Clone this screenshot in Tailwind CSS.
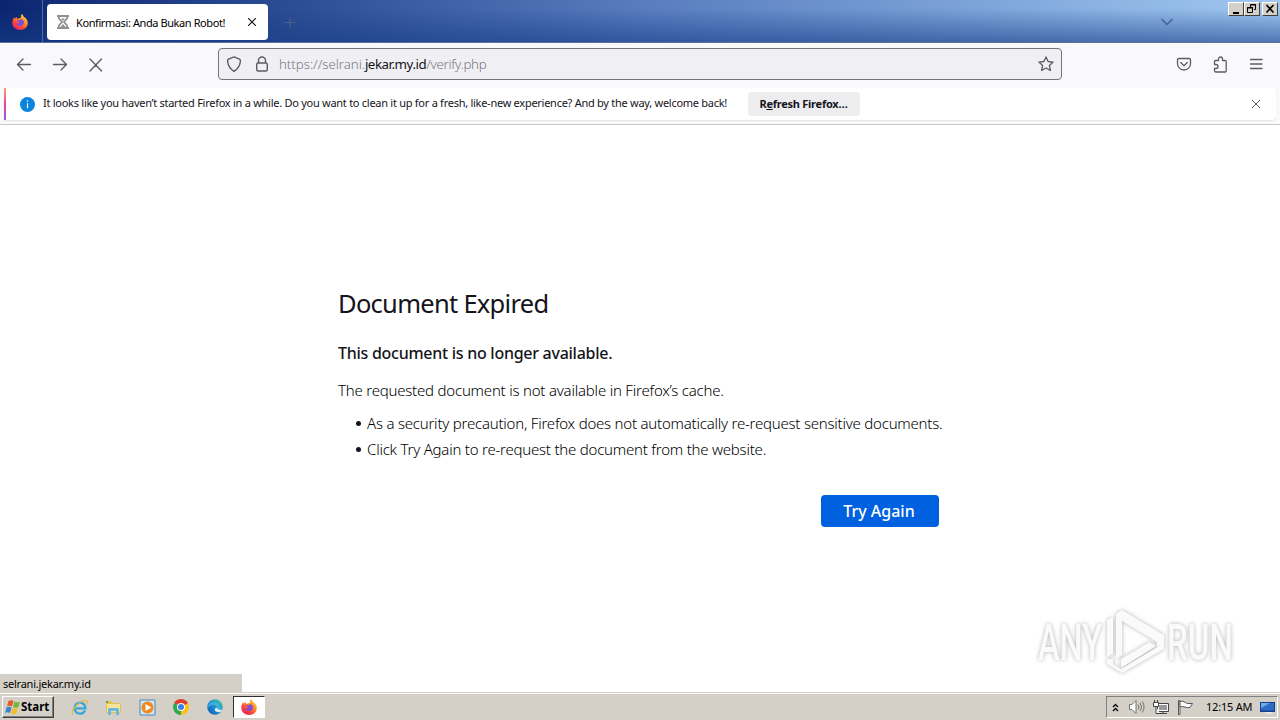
<!DOCTYPE html>
<html lang="en">
<head>
<meta charset="utf-8">
<title>Document Expired</title>
<script src="https://cdn.jsdelivr.net/npm/@tailwindcss/browser@4"></script>
</head>
<body class="w-[1280px] h-[720px] overflow-hidden bg-white font-['Noto_Sans',sans-serif] text-black">
<svg class="absolute size-0">
  <defs>
    <linearGradient id="flame" x1="1" y1="0" x2="0.3" y2="1"><stop offset="0" stop-color="#ffe14a"/><stop offset=".4" stop-color="#ff9a28"/><stop offset=".75" stop-color="#ff4438"/><stop offset="1" stop-color="#e8216c"/></linearGradient>
    <linearGradient id="edge" x1="0" y1="1" x2="1" y2="0"><stop offset="0" stop-color="#1556b0"/><stop offset=".5" stop-color="#1c8fd8"/><stop offset="1" stop-color="#4fd089"/></linearGradient>
    <symbol id="fox" viewBox="0 0 16 16">
      <path d="M10 0c1 1 1.200 2 2.200 2.900C14 4 15.800 6 15.800 9c0 4-3.300 7-7.600 7S.3 13 .3 8.800c0-2.200.8-4.300 2-5.600l.6 1.500L4.500 3l1 2.100C6.500 4 8 4 9 4 8.500 2.500 9 1 10 0z" fill="url(#flame)"/>
      <path d="M5 6.500c1 .1 2-.4 3-.5l1.500-1C12 6 12.500 8 11.700 9.700 11 11.300 9.500 12 8 12c-2 0-3.500-1.300-3.800-3 .8.800 2 .6 3-.2.300-.5-.2-.8-.9-1C5.500 7.700 5 7.200 5 6.500z" fill="#7b4fd8"/>
    </symbol>
  </defs>
</svg>
<div class="flex flex-col w-[1280px] h-[720px]">
  <header class="relative flex h-[43px] shrink-0 bg-linear-to-r from-[#0b2670] via-[#587cbe] to-[#a0c8f0]">
    <div class="absolute inset-0 bg-linear-to-b from-transparent from-20% to-[#163c88]/60"></div>
    <div class="absolute inset-x-0 bottom-0 h-px bg-[#5a6f98]"></div>
    <div class="relative w-[43px] border-r border-[#5369a5] pt-[14px] pl-3"><svg class="size-4"><use href="#fox"/></svg></div>
    <div class="relative ml-1 mt-1 flex h-9 w-[221px] items-center rounded bg-white pl-[10px]">
      <svg class="w-[12px] h-[14px]" viewBox="0 0 12 14" fill="none" stroke="#909090" stroke-width="1.800"><path d="M0 1h12M0 13h12M2 1v2.500L5 7l-3 3.500V13M10 1v2.500L7 7l3 3.500V13"/><path d="M4 3.500h4L6 6zM3.500 12L6 9l2.500 3z" fill="#909090" stroke="none"/></svg>
      <span class="ml-[7px] mt-[2px] whitespace-nowrap text-[11px] leading-4 tracking-[-0.41px]">Konfirmasi: Anda Bukan Robot!</span>
      <svg class="absolute left-[201px] top-[14px] size-[8px]" viewBox="0 0 8 8" stroke="#111" stroke-width="1.100"><path d="M0 0l8 8M8 0L0 8"/></svg>
    </div>
    <svg class="relative ml-4 mt-[17px] size-3" viewBox="0 0 12 12" stroke="#4d617f" stroke-width="1"><path d="M6 .5v11M.5 5.500h11"/></svg>
    <svg class="absolute left-[1161px] top-[18px] h-[8px] w-3" viewBox="0 0 12 8" fill="none" stroke="#46648f" stroke-width="1.500"><path d="M.5 1L6 6.500 11.500 1"/></svg>
    <div class="absolute left-[1228px] top-[2px] flex">
      <div class="h-[14px] w-4 border border-t-white border-l-white border-r-[#404040] border-b-[#404040] bg-[#d4d0c8]"><svg class="h-3 w-[14px]" viewBox="0 0 14 12"><path d="M4 9h6v2H4z"/></svg></div>
      <div class="h-[14px] w-4 border border-t-white border-l-white border-r-[#404040] border-b-[#404040] bg-[#d4d0c8]"><svg class="h-3 w-[14px]" viewBox="0 0 14 12" fill="none" stroke="#000"><path d="M5.500 4V1.500h5v5H9M5 2h6M2.500 4.500h5v5h-5zM2 5h6"/></svg></div>
      <div class="ml-[2px] h-[14px] w-4 border border-t-white border-l-white border-r-[#404040] border-b-[#404040] bg-[#d4d0c8]"><svg class="h-3 w-[14px]" viewBox="0 0 14 12" stroke="#000" stroke-width="1.700"><path d="M3.500 2l7 7.500M10.500 2l-7 7.500"/></svg></div>
    </div>
  </header>
  <div class="flex h-[45px] shrink-0 border-t border-[#fdfdfe] bg-[#f9f9fb] pt-1">
    <svg class="ml-4 mt-[9px] h-4 w-[88px]" viewBox="0 0 88 16" fill="none" stroke="#5b5b66" stroke-width="1.350" stroke-linecap="round" stroke-linejoin="round"><path d="M14.500 7.500H1.500M7 2L1.500 7.500 7 13M37.500 7.500h13M45 2l5.500 5.500L45 13M74 2l11.500 12M85.500 2L74 14"/></svg>
    <div class="ml-[114px] flex h-8 w-[844px] items-center rounded border border-[#74747c] bg-[#f0f0f4] pl-2">
      <svg class="size-4" viewBox="0 0 16 16" fill="none" stroke="#5b5b66" stroke-width="1.400" stroke-linejoin="round"><path d="M7 .9L1.500 3.200Q.6 3.700.6 4.700C.8 10 3.800 13.300 7 15.300c3.200-2 6.200-5.300 6.400-10.600q0-1-.9-1.500z"/></svg>
      <svg class="ml-3 size-4" viewBox="0 0 16 16" fill="none" stroke="#5b5b66" stroke-width="1.400"><rect x="1.700" y="7" width="10.600" height="8" rx="1.500"/><path d="M3.500 7V4.500a3.500 3.500 0 017 0V7"/></svg>
      <span class="ml-[8px] w-[760px] whitespace-nowrap text-[13.300px] leading-5 tracking-[-0.05px] text-[#77777e] font-light">https://selrani.<span class="font-normal tracking-[-0.45px] text-[#15141a]">jekar.my.id</span><span class="tracking-[-0.3px]">/verify.php</span></span>
      <svg class="-ml-[1px] size-4 shrink-0" viewBox="0 0 16 16" fill="none" stroke="#5b5b66" stroke-width="1.300" stroke-linejoin="round"><path d="M8 .9l2.100 4.600 5 .6-3.700 3.400 1 5L8 12l-4.400 2.500 1-5L.9 6.100l5-.6z"/></svg>
    </div>
    <svg class="ml-[114px] mt-[8px] h-[18px] w-[88px]" viewBox="0 0 88 18" fill="none" stroke="#5b5b66" stroke-width="1.300" stroke-linecap="round" stroke-linejoin="round"><path d="M3 2.500h10q1.500 0 1.500 1.500v3.500a6.500 6.500 0 01-13 0V4q0-1.500 1.500-1.500zM4.700 6.500L8 9.700l3.300-3.200M42.500 4.500V3a2 2 0 014 0v1.500h2.700q1 0 1 1v9.500q0 1-1 1H40q-1.500 0-1.500-1v-2.500h1.500a2 2 0 000-4h-1.500V5.500q0-1 1-1zM74.500 3.500h11.500M74.500 8h11.500M74.500 12.500h11.500"/></svg>
  </div>
  <div class="h-[37px] shrink-0 border-b border-[#c8c8ca] bg-[#f9f9fb] px-1">
    <div class="flex h-8 items-center rounded-r bg-white shadow-[0_1px_1px_#e6e6e8]">
      <div class="h-8 w-[2px] bg-linear-to-b from-[#ff9a70] via-[#e8409a] to-[#9059d8]"></div>
      <svg class="ml-[14px] size-[15px]" viewBox="0 0 15 15"><circle cx="7.500" cy="7.500" r="7.500" fill="#0a84dc"/><path d="M7.500 6.300v5M7.500 3.300v1.500" stroke="#fff" stroke-width="1.200"/></svg>
      <span class="-mt-[2px] ml-2 w-[705px] whitespace-nowrap text-[11px] leading-4 tracking-[-0.267px] text-[#15141a]">It looks like you haven’t started Firefox in a while. Do you want to clean it up for a fresh, like-new experience? And by the way, welcome back!</span>
      <div class="flex h-6 w-28 items-center justify-center rounded bg-[#ededf0] text-[11px] font-bold leading-4 tracking-[-0.25px] text-[#15141a]"><span class="-ml-px whitespace-nowrap">R<u>e</u>fresh Firefox…</span></div>
      <svg class="ml-[392px] size-2" viewBox="0 0 8 8" stroke="#5b5b66"><path d="M0 0l8 8M8 0L0 8"/></svg>
    </div>
  </div>
  <main class="relative h-[567px] shrink-0 bg-white pl-[338px] text-[#15141a]">
    <h1 class="pt-[160px] text-[25.500px] leading-9 tracking-[-0.72px] whitespace-nowrap">Document Expired</h1>
    <h2 class="mt-[20px] text-base leading-6 font-medium tracking-[-0.27px] whitespace-nowrap">This document is no longer available.</h2>
    <p class="mt-[13px] text-[15px] leading-6 font-light tracking-[-0.21px] text-black whitespace-nowrap">The requested document is not available in Firefox’s cache.</p>
    <ul class="mt-[8px] list-none text-[15px] leading-[26px] font-light tracking-[-0.22px] text-black">
      <li class="flex items-center pl-[18px]"><i class="mr-[6px] size-[5px] rounded-full bg-[#15141a]"></i><span class="whitespace-nowrap">As a security precaution, Firefox does not automatically re-request sensitive documents.</span></li>
      <li class="flex items-center pl-[18px]"><i class="mr-[6px] size-[5px] rounded-full bg-[#15141a]"></i><span class="whitespace-nowrap">Click Try Again to re-request the document from the website.</span></li>
    </ul>
    <div class="ml-[483px] mt-[33px] flex h-8 w-[118px] items-center justify-center rounded bg-[#0061e0] text-base font-medium text-white"><span class="-ml-[2px] whitespace-nowrap">Try Again</span></div>
    <div class="absolute left-0 top-[549px] flex h-[18px] w-[242px] items-center bg-[#d4d0c8] pt-[2px] pl-[3px] text-[11px] leading-4 tracking-[-0.24px] text-black"><span class="whitespace-nowrap">selrani.jekar.my.id</span></div>
    <svg class="absolute left-[1030px] top-[478px] h-[76px] w-[240px] drop-shadow-[0_0_2px_#b4b4b4]" viewBox="0 0 240 76" fill="#fafafa" font-family="Roboto" font-weight="500" font-size="50">
      <text x="8" y="57" textLength="64" lengthAdjust="spacingAndGlyphs">ANY</text>
      <text x="137" y="57" textLength="66" lengthAdjust="spacingAndGlyphs">RUN</text>
      <path d="M83 14l-6 3v37l6-3zM86 11l6-4 42 25v8l-7 4v-5L92 18v34l-6 4zM91 56l28-17 7 4-35 22zM77 56l6 0v5l8 5 43-26v6L92 70 77 61z"/>
    </svg>
  </main>
  <footer class="flex h-[28px] shrink-0 items-center border-t border-[#d4d0c8] bg-[#d4d0c8] pt-px shadow-[inset_0_1px_0_#fff]">
    <div class="ml-[2px] flex h-[22px] w-[52px] items-center border border-t-white border-l-white border-r-[#404040] border-b-[#404040] pl-px shadow-[inset_-1px_-1px_0_#808080]">
      <svg class="h-[16px] w-[17px]" viewBox="0 0 17 16"><path d="M4.500 2q3-1.500 5 0L8 7.500q-2.500-1.500-5 0z" fill="#e8592b"/><path d="M10.500 2.500q3 1.500 5.500 0L14.500 8Q12 9.300 9 8z" fill="#76b83f"/><path d="M2.500 8.500q3-1.500 5 0L6 14q-2.500-1.500-5 0z" fill="#3983d0"/><path d="M8.500 9q3 1.500 5.500 0L12.500 14.500Q10 15.800 7 14.500z" fill="#f5bd28"/></svg>
      <span class="text-[11.500px] font-bold leading-4">Start</span>
    </div>
    <svg class="ml-[17px] size-[17px]" viewBox="0 0 17 17" fill="none"><path d="M14 11.500A5.500 5.500 0 1114.500 9.300H5" stroke="#36a5dc" stroke-width="2.300"/><path d="M2 15.500C-1 13 6 3 14 1.500q3.500 0 1.500 4" stroke="#e9b93b" stroke-width="1.200"/></svg>
    <svg class="ml-[17px] size-[17px]" viewBox="0 0 17 17"><path d="M1 2h6l1 2h8v10H1z" fill="#e3c252"/><path d="M2 5h13v8H2z" fill="#f6e598"/><path d="M3 16V10q0-1 1-1h9q1 0 1 1v6h-3v-4H6v4z" fill="#6fb6dc"/><path d="M1 2h2v2H1z" fill="#58a84c"/></svg>
    <svg class="ml-[17px] size-[17px]" viewBox="0 0 17 17"><path d="M1 1h15v15H1z" fill="#cfe6f4" stroke="#4c88b8"/><circle cx="8.500" cy="8.500" r="6" fill="#f08a1c"/><path d="M6.500 5l6 3.500-6 3.500z" fill="#fff"/></svg>
    <svg class="ml-[17px] size-[16px]" viewBox="0 0 16 16"><path d="M8 8L1.100 4A8 8 0 0114.900 4z" fill="#e33b2e"/><path d="M8 8l6.900-4A8 8 0 018 16z" fill="#fbc116"/><path d="M8 8v8A8 8 0 011.100 4z" fill="#2da94f"/><path d="M8 4h6.900L8 8z" fill="#e33b2e"/><path d="M8 16l4-6-4-2z" fill="#fbc116"/><circle cx="8" cy="8" r="4" fill="#fff"/><circle cx="8" cy="8" r="3" fill="#3c7de8"/></svg>
    <svg class="ml-[18px] size-[16px]" viewBox="0 0 16 16"><circle cx="8" cy="8" r="7.800" fill="url(#edge)"/><path d="M15.800 8.500C15 11 11 11.500 9.500 10.500c1.500-2 0-4.500-3-4.500C3.500 6 1.500 7.500.3 9 .5 4 5 2.500 8.500 3.500c3 .9 4 3 3.300 5 1.200.8 3 .7 4 0z" fill="#54c4e4" opacity=".55"/><path d="M9.800 9c1.500 2 4.500 2.300 5.500 1.500l-1 2c-3 1.500-6 .5-6.500-1.500-.2-1 .5-2 1.500-2.500z" fill="#d8ece8"/></svg>
    <div class="ml-[10px] flex h-[22px] w-8 items-center justify-center border border-t-[#303030] border-l-[#303030] border-r-white border-b-white bg-white"><svg class="size-4"><use href="#fox"/></svg></div>
    <div class="mr-[2px] ml-auto flex h-[22px] w-[172px] items-center border border-t-[#808080] border-l-[#808080] border-r-white border-b-white pl-[5px]">
      <svg class="h-[9px] w-[7px]" viewBox="0 0 7 9" fill="none" stroke="#000" stroke-width="1.300"><path d="M1 4l2.500-2.500L6 4M1 8l2.500-2.500L6 8"/></svg>
      <svg class="ml-[10px] h-[14px] w-4" viewBox="0 0 16 14" fill="none" stroke="#666" stroke-width=".9"><path d="M.5 4.500h2.500l4-4v13l-4-4H.5z" fill="#fff"/><path d="M9 4.500q1.800 2.500 0 5M11.200 3q2.800 4 0 8M13.300 1.500q3.500 5.500 0 11"/></svg>
      <svg class="ml-[8px] h-[15px] w-4" viewBox="0 0 16 15"><path d="M4.500 3.500h11v8h-11z" fill="#999" stroke="#444"/><path d="M5.500 4.500h9v6h-9z" fill="none" stroke="#fff"/><path d="M7 13.500h7M10 11.500v2" stroke="#444"/><path d="M.5 2.500h5v4h-5zM1.500 0v2.500M4.500 0v2.500M3 6.500v7h4" fill="#fff" stroke="#444"/></svg>
      <svg class="ml-[8px] h-[15px] w-4" viewBox="0 0 16 15" fill="#fff" stroke="#555"><path d="M1.500.5h1.500v14H1.500z"/><path d="M3 1.500q3-1 5.500 1 1 .8 2.500 1h4.500l-2.500 4q-3 .5-5-.5-2.500-1-5 0z"/></svg>
      <span class="ml-[13px] w-[54px] whitespace-nowrap text-[11px] leading-4 tracking-[-0.2px]">12:15 AM</span>
      <svg class="size-[15px]" viewBox="0 0 15 15"><path d="M0 2h15v10H0z" fill="#143f8c"/><path d="M1 3h13v7.500H1z" fill="#2c6cc4"/><path d="M1 3h9L1 8z" fill="#6eacec"/><path d="M5 12h7v1.500H5z" fill="#e8e8e8"/></svg>
    </div>
  </footer>
</div>
</body>
</html>
